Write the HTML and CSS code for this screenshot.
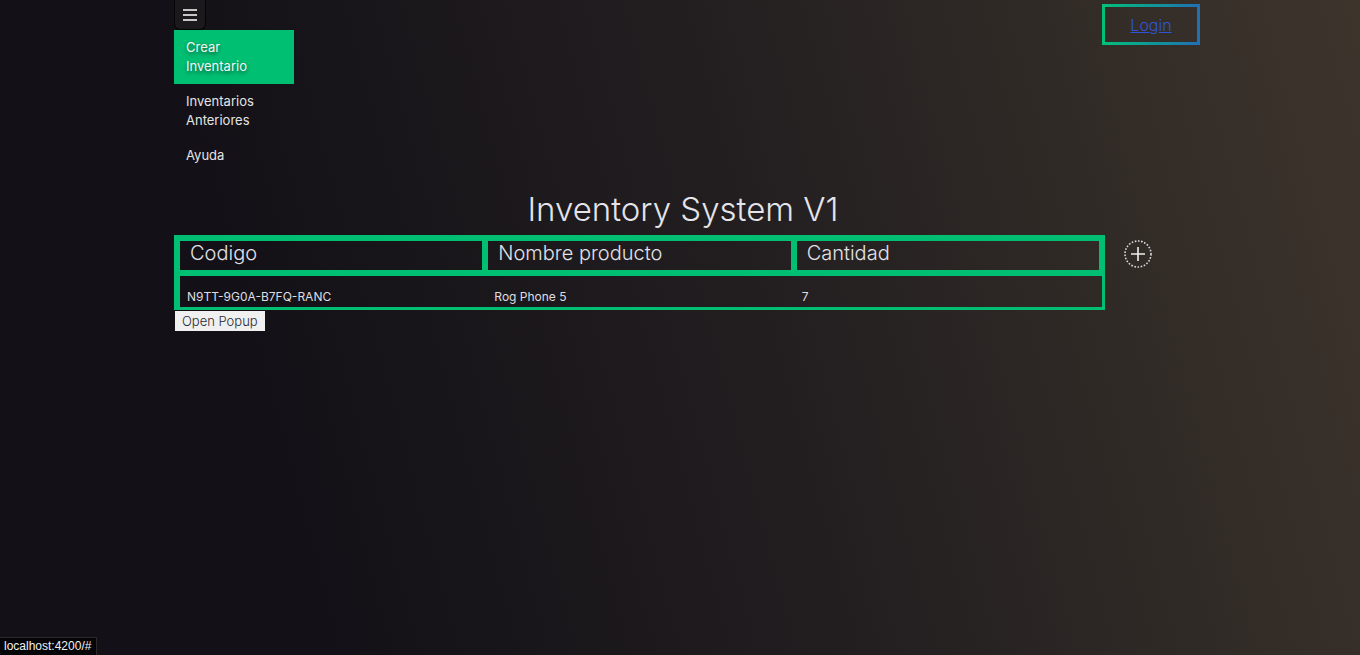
FILE: index.html
```html
<!DOCTYPE html>
<html lang="es">
<head>
<meta charset="utf-8">
<title>Inventory System V1</title>
<link rel="stylesheet" href="styles.css">
</head>
<body>
<div class="page">
  <div class="top">
    <nav class="sidebar">
      <button class="burger" aria-label="menu">
        <svg width="14" height="12" viewBox="0 0 14 12"><path d="M0 1h14M0 6h14M0 11h14" stroke="#fff" stroke-width="1.6"/></svg>
      </button>
      <a class="item active" href="#">Crear<br>Inventario</a>
      <a class="item" href="#">Inventarios<br>Anteriores</a>
      <a class="item" href="#">Ayuda</a>
    </nav>
    <div class="login-box"><a href="#" class="login">Login</a></div>
  </div>
  <h1 class="title">Inventory System V1</h1>
  <div class="table-row">
    <div class="table">
      <div class="thead">
        <div class="th">Codigo</div>
        <div class="th">Nombre producto</div>
        <div class="th">Cantidad</div>
      </div>
      <div class="tbody">
        <div class="td">N9TT-9G0A-B7FQ-RANC</div>
        <div class="td">Rog Phone 5</div>
        <div class="td">7</div>
      </div>
    </div>
    <button class="add" aria-label="agregar">
      <svg width="30" height="30" viewBox="0 0 30 30"><circle cx="15" cy="15" r="13" fill="none" stroke="#d8d8e0" stroke-width="1.6" stroke-dasharray="1.6 1.6"/><path d="M8 15h14M15 8v14" stroke="#f0f0f0" stroke-width="1.6"/></svg>
    </button>
  </div>
  <button class="popup">Open Popup</button>
</div>
<div class="status">localhost:4200/#</div>
</body>
</html>
```
FILE: styles.css
```css
html, body {
  margin: 0;
  height: 100%;
}
body {
  background: linear-gradient(75deg, #131117 22%, #221e20 55%, #3d352c 100%);
  font-family: "Inter", "Noto Sans", sans-serif;
  color: #e6e6e6;
  overflow: hidden;
}
.page {
  width: 1026px;
  margin-left: 174px;
}
.top {
  display: flex;
  justify-content: space-between;
  align-items: flex-start;
}
.sidebar {
  width: 120px;
  display: flex;
  flex-direction: column;
}
.burger {
  width: 32px;
  height: 30px;
  padding: 0;
  background: #1c191d;
  border: 1px solid #050505;
  border-top: none;
  border-radius: 0 0 6px 6px;
  display: flex;
  align-items: center;
  justify-content: center;
}
.item {
  display: block;
  padding: 8px 12px;
  font-size: 13px;
  line-height: 19px;
  color: #e4e4e4;
  text-decoration: none;
}
.item.active {
  background: #00bf73;
  color: #f4f4f4;
  text-shadow: 0 2px 4px rgba(0, 0, 0, 0.55);
}
.login-box {
  margin-top: 4px;
  width: 92px;
  height: 35px;
  border: 3px solid;
  border-image: linear-gradient(to right, #00c07a, #2170b4) 1;
  display: flex;
  align-items: center;
  justify-content: center;
}
.login {
  color: #2f55d6;
  font-size: 16px;
  font-weight: 300;
}
.title {
  margin: 16px 0 6px;
  padding-right: 8px;
  text-align: center;
  font-size: 33px;
  font-weight: 300;
  line-height: 40px;
  color: #e4e4ea;
}
.table-row {
  display: flex;
  align-items: flex-start;
}
.table {
  width: 925px;
  border: 3px solid #00bf73;
}
.thead {
  display: flex;
}
.th {
  flex: 1;
  border: 3px solid #00bf73;
  height: 29px;
  padding-left: 10px;
  font-size: 20px;
  font-weight: 300;
  line-height: 25px;
  color: #e2e2e8;
}
.tbody {
  display: flex;
  border-left: 3px solid #00bf73;
  border-top: 3px solid #00bf73;
  height: 31px;
}
.td {
  flex: 1;
  padding: 13px 0 0 7px;
  font-size: 12px;
  line-height: 15px;
  color: #dedee2;
}
.add {
  margin: 4px 0 0 18px;
  padding: 0;
  background: none;
  border: none;
  width: 30px;
  height: 30px;
}
.popup {
  margin-left: 1px;
  height: 20px;
  padding: 0 7px;
  background: #f0f0f0;
  border: none;
  font-family: "Inter", "Noto Sans", sans-serif;
  font-size: 13px;
  font-weight: 300;
  color: #2a2a30;
}
.status {
  position: fixed;
  left: 0;
  bottom: 0;
  height: 17px;
  padding: 0 5px 0 4px;
  background: #050508;
  border-top: 1px solid #2a2a2a;
  border-right: 1px solid #2a2a2a;
  font-family: "Liberation Sans", Arial, sans-serif;
  font-size: 12px;
  line-height: 17px;
  color: #f0f0f0;
}
```
